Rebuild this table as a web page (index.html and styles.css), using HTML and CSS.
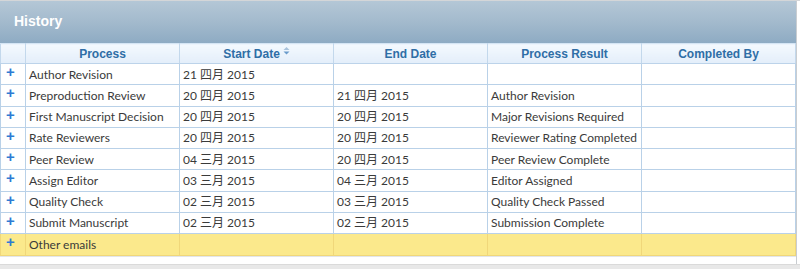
FILE: index.html
```html
<!DOCTYPE html>
<html>
<head>
<meta charset="utf-8">
<link rel="stylesheet" href="styles.css">
</head>
<body>
<div class="page">
  <div class="panel">
    <div class="titlebar"><h2 class="title">History</h2></div>
    <table class="grid">
      <colgroup>
        <col class="c-exp"><col class="c-w"><col class="c-w"><col class="c-w"><col class="c-w"><col class="c-w">
      </colgroup>
      <thead>
        <tr>
          <th></th>
          <th>Process</th>
          <th>Start Date<svg class="sort" width="7" height="8" viewBox="0 0 7 8"><path d="M0.5 3 L3.5 0 L6.5 3 Z" fill="#a9c3dc"/><path d="M0.5 4.5 L3.5 7.5 L6.5 4.5 Z" fill="#6a9bcb"/></svg></th>
          <th>End Date</th>
          <th>Process Result</th>
          <th>Completed By</th>
        </tr>
      </thead>
      <tbody>
        <tr><td class="exp">+</td><td>Author Revision</td><td>21 四月 2015</td><td></td><td></td><td></td></tr>
        <tr><td class="exp">+</td><td>Preproduction Review</td><td>20 四月 2015</td><td>21 四月 2015</td><td>Author Revision</td><td></td></tr>
        <tr><td class="exp">+</td><td>First Manuscript Decision</td><td>20 四月 2015</td><td>20 四月 2015</td><td>Major Revisions Required</td><td></td></tr>
        <tr><td class="exp">+</td><td>Rate Reviewers</td><td>20 四月 2015</td><td>20 四月 2015</td><td>Reviewer Rating Completed</td><td></td></tr>
        <tr><td class="exp">+</td><td>Peer Review</td><td>04 三月 2015</td><td>20 四月 2015</td><td>Peer Review Complete</td><td></td></tr>
        <tr><td class="exp">+</td><td>Assign Editor</td><td>03 三月 2015</td><td>04 三月 2015</td><td>Editor Assigned</td><td></td></tr>
        <tr><td class="exp">+</td><td>Quality Check</td><td>02 三月 2015</td><td>03 三月 2015</td><td>Quality Check Passed</td><td></td></tr>
        <tr><td class="exp">+</td><td>Submit Manuscript</td><td>02 三月 2015</td><td>02 三月 2015</td><td>Submission Complete</td><td></td></tr>
        <tr class="hl"><td class="exp">+</td><td>Other emails</td><td></td><td></td><td></td><td></td></tr>
      </tbody>
    </table>
    <div class="spacer"></div>
  </div>
  <div class="footer"></div>
</div>
</body>
</html>
```

FILE: styles.css
```css
html, body {
  margin: 0;
  padding: 0;
  background: #ffffff;
}
.page {
  width: 800px;
  height: 269px;
  overflow: hidden;
  font-family: "Liberation Sans", "Noto Sans CJK SC", sans-serif;
  border-top: 1px solid #d4d6d8;
  box-sizing: border-box;
  display: flex;
  flex-direction: column;
}
.panel {
  width: 797px;
  border-right: 1px solid #c9cdd1;
  box-sizing: border-box;
  background: #ffffff;
}
.titlebar {
  height: 42px;
  background: linear-gradient(to bottom, #b4c7d6 0%, #a3bacd 50%, #8eabc3 100%);
  display: flex;
  align-items: center;
  padding-left: 14px;
  padding-bottom: 2px;
  box-sizing: border-box;
}
.title {
  margin: 0;
  color: #ffffff;
  font-size: 14px;
  font-weight: bold;
}
.grid {
  border-collapse: collapse;
  table-layout: fixed;
  width: 796px;
  font-size: 12px;
}
.c-exp { width: 25px; }
.c-w { width: 154px; }
.grid th {
  height: 19px;
  padding: 0;
  color: #2f6ea6;
  font-weight: bold;
  font-size: 12px;
  text-align: center;
  background: linear-gradient(to bottom, #f4f9fe 0%, #e3eefa 100%);
  border: 1px solid #c3d8ec;
  border-top: 1px solid #d5e5f4;
  border-bottom: 1px solid #bcd3ea;
  vertical-align: middle;
}
.sort {
  margin-left: 3px;
  vertical-align: 3px;
}
.grid td {
  height: 19.25px;
  padding: 1px 0 0 3px;
  color: #3a3a3a;
  font-family: "Lato", "Noto Sans CJK SC", sans-serif;
  font-size: 12px;
  line-height: 14px;
  border: 1px solid #b9d1e8;
  white-space: nowrap;
  overflow: hidden;
  vertical-align: middle;
}
.grid td.exp {
  color: #2f7bd3;
  font-family: "Liberation Sans", sans-serif;
  font-weight: bold;
  font-size: 15px;
  text-align: left;
  padding: 0 0 0 5px;
  vertical-align: top;
  line-height: 15px;
}
.grid tr.hl td {
  background: #fbe98c;
  border-color: #f0d77a;
  height: 20px;
}
.spacer {
  height: 7px;
  border-top: 1px solid #e2e6ea;
}
.footer {
  flex: 1;
  background: #e8e8e8;
  border-top: 1px solid #dadada;
}
```
